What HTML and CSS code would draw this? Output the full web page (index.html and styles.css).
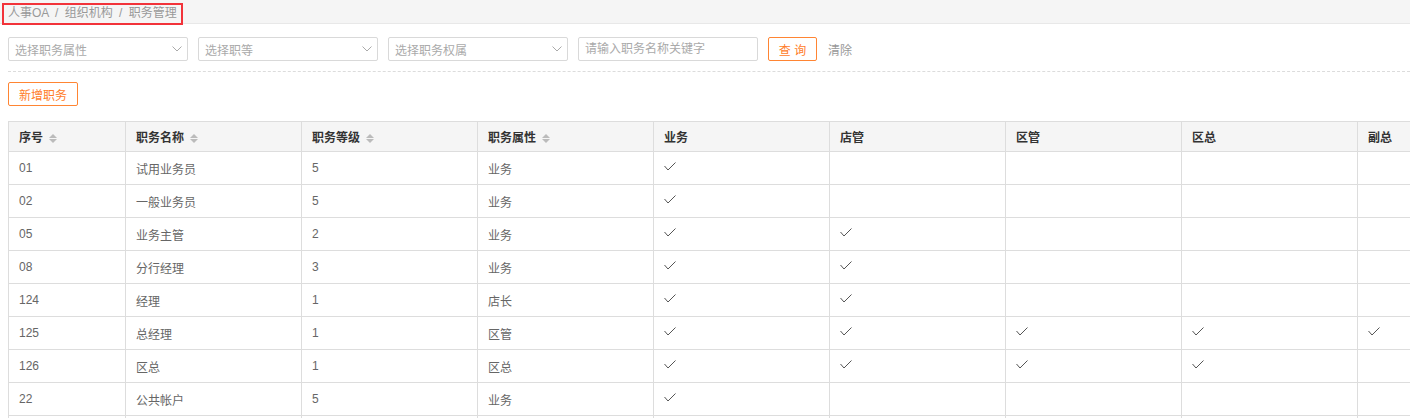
FILE: index.html
```html
<!DOCTYPE html>
<html lang="zh-CN">
<head>
    <meta charset="UTF-8">
    <meta name="viewport" content="width=device-width, initial-scale=1.0">
    <title>职务管理</title>
    <link rel="stylesheet" href="styles.css">
</head>
<body>
    <div class="crumb-bar">
        <span class="crumb">人事OA / 组织机构 / 职务管理</span>
    </div>

    <div class="filters">
        <div class="select">
            <span>选择职务属性</span>
            <svg class="arrow" width="10" height="6" viewBox="0 0 10 6"><polyline points="0.5,0.5 5,5 9.5,0.5" fill="none" stroke="#aaa" stroke-width="1"/></svg>
        </div>
        <div class="select">
            <span>选择职等</span>
            <svg class="arrow" width="10" height="6" viewBox="0 0 10 6"><polyline points="0.5,0.5 5,5 9.5,0.5" fill="none" stroke="#aaa" stroke-width="1"/></svg>
        </div>
        <div class="select">
            <span>选择职务权属</span>
            <svg class="arrow" width="10" height="6" viewBox="0 0 10 6"><polyline points="0.5,0.5 5,5 9.5,0.5" fill="none" stroke="#aaa" stroke-width="1"/></svg>
        </div>
        <input type="text" class="keyword" placeholder="请输入职务名称关键字">
        <button class="btn-orange search">查 询</button>
        <span class="clear">清除</span>
    </div>

    <div class="divider"></div>

    <div class="toolbar">
        <button class="btn-orange add">新增职务</button>
    </div>

    <div class="table-wrap">
        <table id="jobTable">
            <colgroup>
                <col style="width:117px">
                <col style="width:176px">
                <col style="width:176px">
                <col style="width:176px">
                <col style="width:176px">
                <col style="width:176px">
                <col style="width:176px">
                <col style="width:176px">
                <col style="width:176px">
            </colgroup>
            <thead>
                <tr>
                    <th>序号 <i class="sort"></i></th>
                    <th>职务名称 <i class="sort"></i></th>
                    <th>职务等级 <i class="sort"></i></th>
                    <th>职务属性 <i class="sort"></i></th>
                    <th>业务</th>
                    <th>店管</th>
                    <th>区管</th>
                    <th>区总</th>
                    <th>副总</th>
                </tr>
            </thead>
            <tbody>
                <!-- rows filled by script -->
            </tbody>
        </table>
    </div>

    <script>
        const rows = [
            ["01", "试用业务员", "5", "业务", 1],
            ["02", "一般业务员", "5", "业务", 1],
            ["05", "业务主管", "2", "业务", 2],
            ["08", "分行经理", "3", "业务", 2],
            ["124", "经理", "1", "店长", 2],
            ["125", "总经理", "1", "区管", 5],
            ["126", "区总", "1", "区总", 4],
            ["22", "公共帐户", "5", "业务", 1],
            ["", "", "", "", 0]
        ];
        const check = '<svg class="check" width="12" height="9" viewBox="0 0 12 9"><polyline points="0.5,4 4,8 11.5,0.5" fill="none" stroke="#555" stroke-width="1"/></svg>';
        const tbody = document.querySelector("#jobTable tbody");

        rows.forEach(row => {
            const tr = document.createElement("tr");
            let html = `<td>${row[0]}</td><td>${row[1]}</td><td>${row[2]}</td><td>${row[3]}</td>`;
            for (let i = 0; i < 5; i++) {
                html += `<td>${i < row[4] ? check : ""}</td>`;
            }
            tr.innerHTML = html;
            tbody.appendChild(tr);
        });
    </script>
</body>
</html>
```

FILE: styles.css
```css
html, body {
    overflow: hidden;
}
body {
    margin: 0;
    font-family: "Liberation Sans", "Noto Sans CJK SC", sans-serif;
    font-size: 12px;
    color: #666;
    background: #fff;
}
.crumb-bar {
    height: 23px;
    background: #f5f5f5;
    border-bottom: 1px solid #e8e8e8;
    padding-left: 2px;
    display: flex;
    align-items: flex-start;
}
.crumb {
    margin-top: 3px;
    height: 18px;
    line-height: 17px;
    padding: 0 4px;
    border: 2px solid #f2333a;
    color: #999;
    white-space: nowrap;
    word-spacing: 3px;
}
.filters {
    display: flex;
    align-items: center;
    gap: 10px;
    margin: 13px 8px 0;
    height: 24px;
}
.select {
    box-sizing: border-box;
    width: 180px;
    height: 24px;
    border: 1px solid #d9d9d9;
    border-radius: 2px;
    padding: 0 6px;
    display: flex;
    align-items: center;
    justify-content: space-between;
    color: #aaa;
}
.select .arrow {
    margin-right: -1px;
}
.keyword {
    box-sizing: border-box;
    width: 180px;
    height: 24px;
    border: 1px solid #d9d9d9;
    border-radius: 2px;
    padding: 0 6px;
    font: inherit;
    outline: none;
}
.keyword::placeholder {
    color: #aaa;
}
.btn-orange {
    box-sizing: border-box;
    height: 24px;
    border: 1px solid #ff8533;
    border-radius: 2px;
    background: #fff;
    color: #ff7d2a;
    font: inherit;
    padding: 0;
    cursor: pointer;
}
.search {
    width: 49px;
}
.clear {
    margin-left: 1px;
    color: #999;
}
.divider {
    margin: 10px 0 0 8px;
    border-top: 1px dashed #dcdcdc;
}
.toolbar {
    margin: 10px 8px 0;
    display: flex;
}
.add {
    width: 70px;
}
.table-wrap {
    margin: 15px 0 0 8px;
    overflow: hidden;
}
table {
    border-collapse: collapse;
    table-layout: fixed;
    width: 1525px;
}
th, td {
    border: 1px solid #ddd;
    padding: 0 10px;
    text-align: left;
    white-space: nowrap;
}
th {
    height: 29px;
    background: #f5f5f5;
    color: #333;
    font-weight: bold;
}
td {
    height: 32px;
    color: #666;
}
.check {
    display: block;
    margin-top: -3px;
}
.sort {
    display: inline-block;
    position: relative;
    width: 8px;
    height: 9px;
    margin-left: 3px;
    vertical-align: -1px;
}
.sort::before, .sort::after {
    content: "";
    position: absolute;
    left: 0;
    border-left: 4px solid transparent;
    border-right: 4px solid transparent;
}
.sort::before {
    top: 0;
    border-bottom: 4px solid #bbb;
}
.sort::after {
    bottom: 0;
    border-top: 4px solid #bbb;
}
```
